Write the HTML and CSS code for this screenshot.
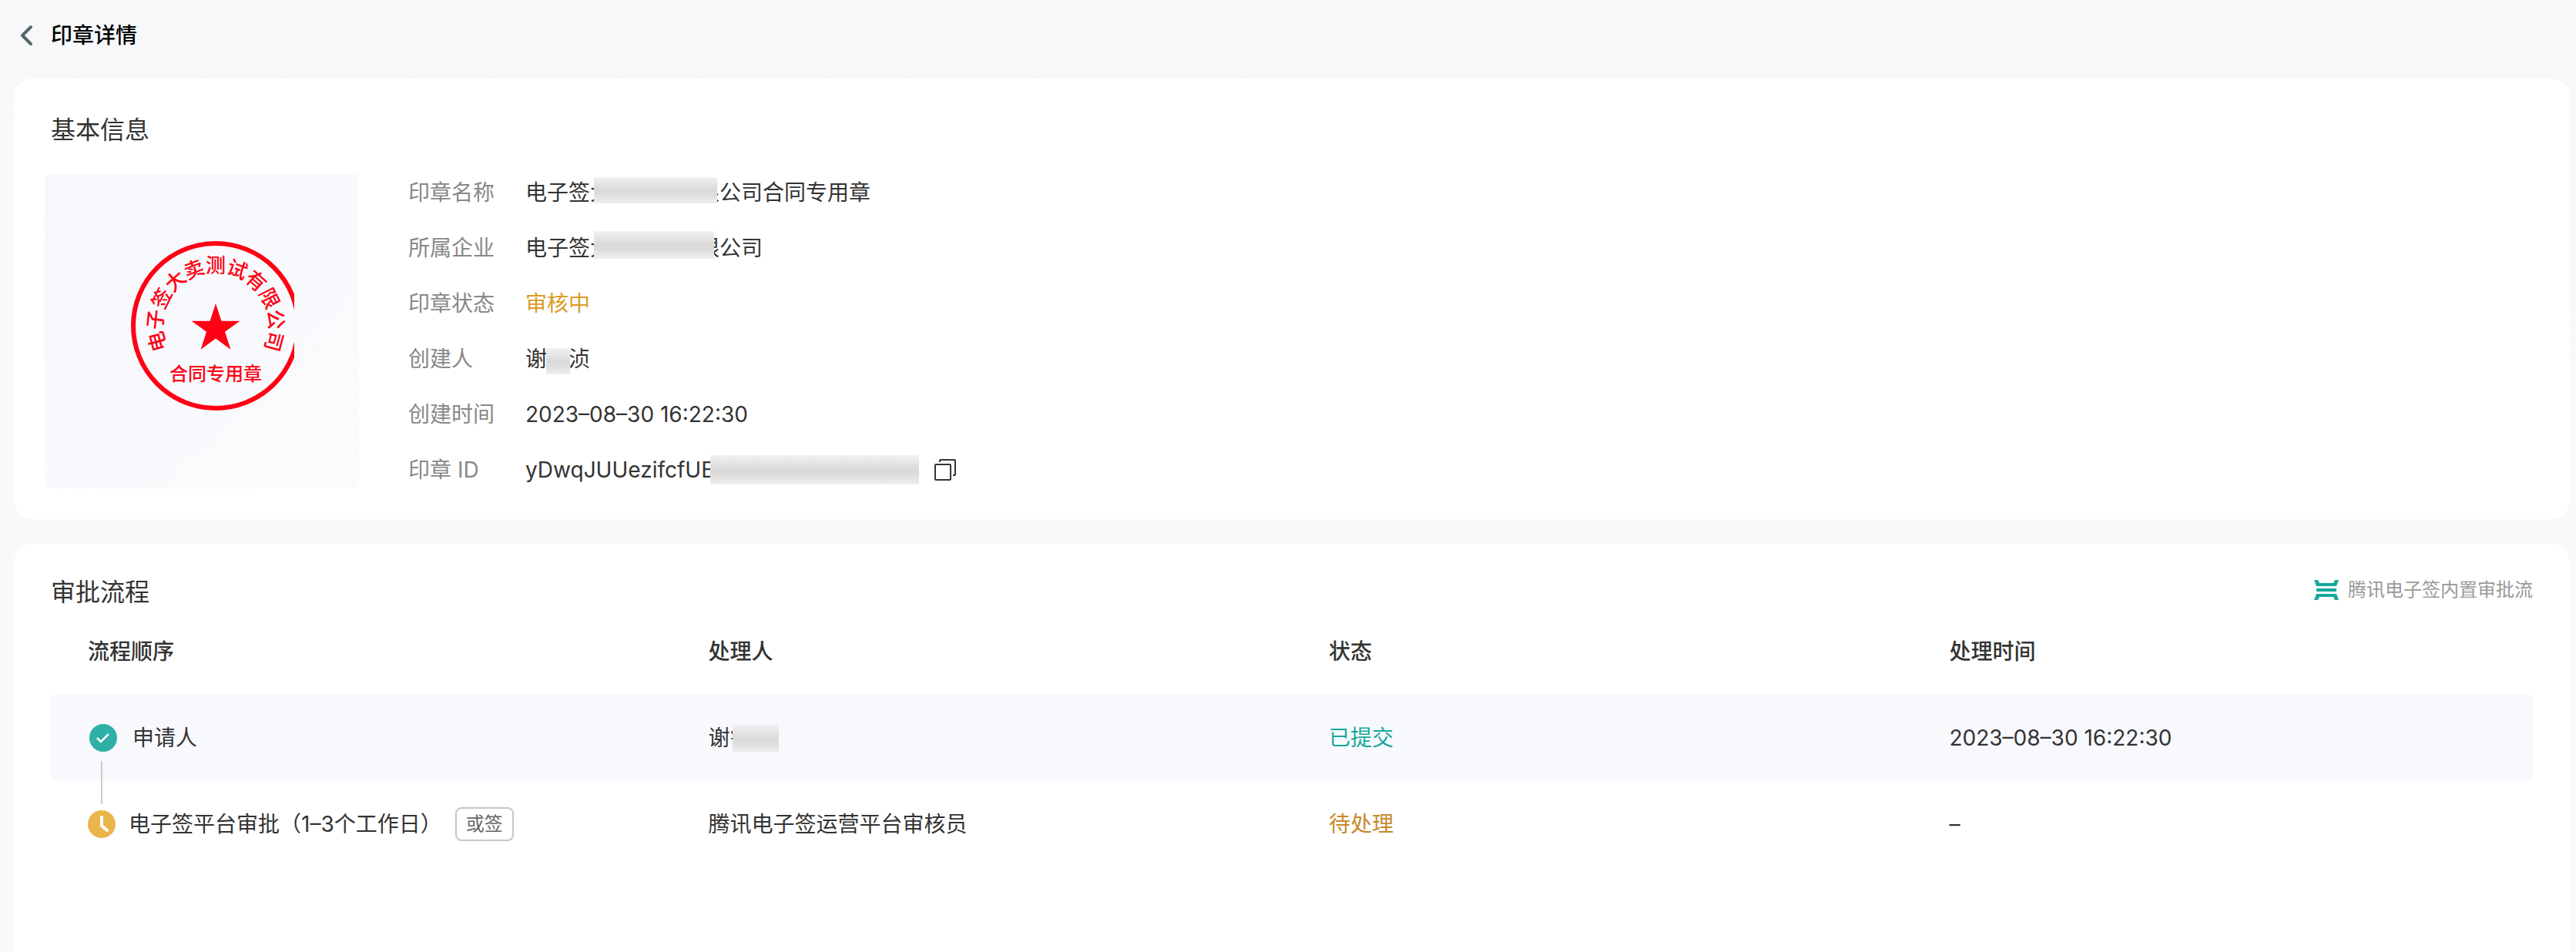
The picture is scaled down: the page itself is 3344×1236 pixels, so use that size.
FILE: index.html
```html
<!DOCTYPE html>
<html lang="zh-CN">
<head>
    <meta charset="UTF-8">
    <meta name="viewport" content="width=device-width, initial-scale=1.0">
    <title>印章详情</title>
    <link rel="stylesheet" href="styles.css">
</head>
<body>

<header class="page-header">
    <button class="back-btn" type="button" aria-label="返回">
        <svg width="18" height="28" viewBox="0 0 18 28" fill="none" stroke="#566967" stroke-width="4" stroke-linecap="round" stroke-linejoin="round"><path d="M14 3 3 14l11 11"/></svg>
    </button>
    <h1>印章详情</h1>
</header>

<main class="page-main">

    <!-- 基本信息 -->
    <section class="card">
        <h2 class="card-title">基本信息</h2>
        <div class="basic-info">
            <div class="seal-box">
                <svg class="seal" width="240" height="240" viewBox="0 0 240 240" role="img" aria-label="合同专用章">
                    <circle cx="138" cy="113" r="107" fill="none" stroke="#ff0014" stroke-width="6"/>
                    <path fill="#ff0014" d="M138 84l7.400 22.700h24l-19.400 14.100 7.400 22.900-19.400-14.200-19.400 14.200 7.400-22.900-19.400-14.100h24z"/>
                    <g class="seal-text">
                        <text x="138" y="44" transform="rotate(-105 138 113)">电</text>
                        <text x="138" y="44" transform="rotate(-84 138 113)">子</text>
                        <text x="138" y="44" transform="rotate(-63 138 113)">签</text>
                        <text x="138" y="44" transform="rotate(-42 138 113)">大</text>
                        <text x="138" y="44" transform="rotate(-21 138 113)">卖</text>
                        <text x="138" y="44">测</text>
                        <text x="138" y="44" transform="rotate(21 138 113)">试</text>
                        <text x="138" y="44" transform="rotate(42 138 113)">有</text>
                        <text x="138" y="44" transform="rotate(63 138 113)">限</text>
                        <text x="138" y="44" transform="rotate(84 138 113)">公</text>
                        <text x="138" y="44" transform="rotate(105 138 113)">司</text>
                        <text class="seal-type" x="138" y="184">合同专用章</text>
                    </g>
                </svg>
            </div>
            <dl class="info-list">
                <dt>印章名称</dt>
                <dd>电子签大卖测试有限公司合同专用章<span class="mask mask-name"></span></dd>
                <dt>所属企业</dt>
                <dd>电子签大卖测试有限公司<span class="mask mask-corp"></span></dd>
                <dt>印章状态</dt>
                <dd class="auditing">审核中</dd>
                <dt>创建人</dt>
                <dd>谢<span class="hidden-char"></span>浈<span class="mask mask-creator"></span></dd>
                <dt>创建时间</dt>
                <dd>2023–08–30 16:22:30</dd>
                <dt>印章 ID</dt>
                <dd class="seal-id">
                    <span class="id-text">yDwqJUUezifcfUEZ</span><span class="mask mask-id"></span>
                    <button class="copy-btn" type="button" aria-label="复制">
                        <svg width="28" height="28" viewBox="0 0 28 28" fill="none" stroke="#333" stroke-width="2"><rect x="1" y="7" width="20" height="20" rx="1"/><path d="M7 4V2q0-1 1-1h18q1 0 1 1v18q0 1-1 1h-2"/></svg>
                    </button>
                </dd>
            </dl>
        </div>
    </section>

    <!-- 审批流程 -->
    <section class="card card-flow">
        <div class="flow-head">
            <h2 class="card-title">审批流程</h2>
            <div class="flow-source">
                <svg width="32" height="26" viewBox="0 0 32 26" fill="#17a99c"><path d="M0 0h5l2 4h18l2-4h5l-3 8H3z"/><path d="M3 11h26v4H3z"/><path d="M3 18h26l3 8h-5l-2-4H7l-2 4H0z"/></svg>
                腾讯电子签内置审批流
            </div>
        </div>
        <table class="flow-table">
            <thead>
                <tr>
                    <th scope="col">流程顺序</th>
                    <th scope="col">处理人</th>
                    <th scope="col">状态</th>
                    <th scope="col">处理时间</th>
                </tr>
            </thead>
            <tbody>
                <tr class="done">
                    <td>
                        <div class="step step-first">
                            <svg width="36" height="36" viewBox="0 0 36 36" fill="none"><circle cx="18" cy="18" r="18" fill="#2eb0a6"/><path d="m10 18 5 5 10-10" stroke="#fff" stroke-width="2.500"/></svg>
                            申请人
                        </div>
                    </td>
                    <td><div class="handler">谢钅<span class="mask mask-handler"></span></div></td>
                    <td class="submitted">已提交</td>
                    <td>2023–08–30 16:22:30</td>
                </tr>
                <tr>
                    <td>
                        <div class="step step-current">
                            <svg width="36" height="36" viewBox="0 0 36 36" fill="none"><circle cx="18" cy="18" r="18" fill="#eab54a"/><path d="M18 9v11l7 6" stroke="#fff" stroke-width="4" stroke-linecap="round" stroke-linejoin="round"/></svg>
                            电子签平台审批（1–3个工作日）
                            <span class="tag">或签</span>
                        </div>
                    </td>
                    <td>腾讯电子签运营平台审核员</td>
                    <td class="pending">待处理</td>
                    <td>–</td>
                </tr>
            </tbody>
        </table>
    </section>

</main>

</body>
</html>
```

FILE: styles.css
```css
* {
    box-sizing: border-box;
}
body {
    margin: 0;
    min-height: 100vh;
    display: flex;
    flex-direction: column;
    padding: 0 8px 0 18px;
    font-family: Inter, "Noto Sans CJK SC", sans-serif;
    font-size: 28px;
    line-height: 48px;
    color: #333;
    background: linear-gradient(#f7f8fa, #f9fafc);
}
button {
    display: flex;
    padding: 0;
    border: 0;
    background: none;
    cursor: pointer;
}
h1, h2, dl, dd {
    margin: 0;
}

/* 顶部 */
.page-header {
    display: flex;
    align-items: center;
    gap: 22px;
    height: 92px;
    padding-left: 8px;
    margin-bottom: 10px;
}
.page-header h1 {
    font-size: 28px;
    font-weight: 500;
    color: #000;
}
.page-main {
    flex: 1;
    display: flex;
    flex-direction: column;
    gap: 32px;
}

/* 卡片 */
.card {
    padding: 46px 40px 40px;
    border-radius: 24px;
    background: #fff;
}
.card-title {
    font-size: 32px;
    font-weight: 400;
    line-height: 42px;
}
.card > .card-title {
    margin: 0 0 36px 8px;
}
.basic-info {
    display: flex;
    gap: 64px;
}
.seal-box {
    display: flex;
    align-items: center;
    justify-content: center;
    width: 408px;
    height: 408px;
    border-radius: 8px;
    background: linear-gradient(135deg, #f6f8fd, #fafbfc);
}
.seal-text text {
    font-size: 26px;
    font-weight: 500;
    text-anchor: middle;
    fill: #ff0014;
}
.seal-text .seal-type {
    font-size: 24px;
}
.info-list {
    flex: 1;
    display: grid;
    grid-template-columns: 152px 1fr;
    row-gap: 24px;
}
.info-list dt {
    color: #888;
}
.info-list dd {
    position: relative;
}
.info-list .auditing {
    color: #d99b27;
}
.hidden-char {
    display: inline-block;
    width: 28px;
}
.seal-id {
    display: flex;
    align-items: center;
}
.id-text {
    width: 531px;
}

/* 敏感信息遮挡 */
.mask {
    position: absolute;
    background: linear-gradient(#f1f1f1, #dadada 50%, #dcdcdc 65%, #efefef);
}
.mask-name {
    left: 89px;
    top: 4px;
    width: 160px;
    height: 34px;
}
.mask-corp {
    left: 89px;
    top: 2px;
    width: 156px;
    height: 36px;
}
.mask-creator {
    left: 27px;
    top: 10px;
    width: 31px;
    height: 34px;
}
.mask-id {
    left: 240px;
    top: 5px;
    width: 271px;
    height: 38px;
}
.mask-handler {
    left: 31px;
    top: 7px;
    width: 60px;
    height: 36px;
}

/* 审批流程 */
.card-flow {
    flex: 1;
    padding: 42px 48px 40px;
    border-radius: 24px 24px 0 0;
}
.flow-head {
    display: flex;
    align-items: flex-start;
    justify-content: space-between;
}
.flow-source {
    display: flex;
    align-items: center;
    gap: 12px;
    font-size: 24px;
    line-height: 36px;
    color: #999;
}
.flow-table {
    width: 100%;
    table-layout: fixed;
    border-collapse: collapse;
}
.flow-table th,
.flow-table td {
    height: 112px;
    padding: 0 0 0 48px;
    text-align: left;
}
.flow-table th {
    font-weight: 500;
}
.flow-table .done {
    background: #f8f9fd;
}
.flow-table .submitted {
    color: #17a99c;
}
.flow-table .pending {
    color: #c48a2c;
}
.handler {
    position: relative;
}
.step {
    position: relative;
    display: flex;
    align-items: center;
}
.step-first {
    gap: 20px;
    padding-left: 2px;
}
.step-current {
    gap: 17px;
}
/* 步骤之间的连接线 */
.step-first::after {
    content: "";
    position: absolute;
    left: 17px;
    top: 54px;
    width: 2px;
    height: 56px;
    background: #ccc;
}
.tag {
    padding: 0 12px;
    border: 2px solid #c4c8c8;
    border-radius: 8px;
    font-size: 24px;
    line-height: 40px;
    color: #666;
}
```
